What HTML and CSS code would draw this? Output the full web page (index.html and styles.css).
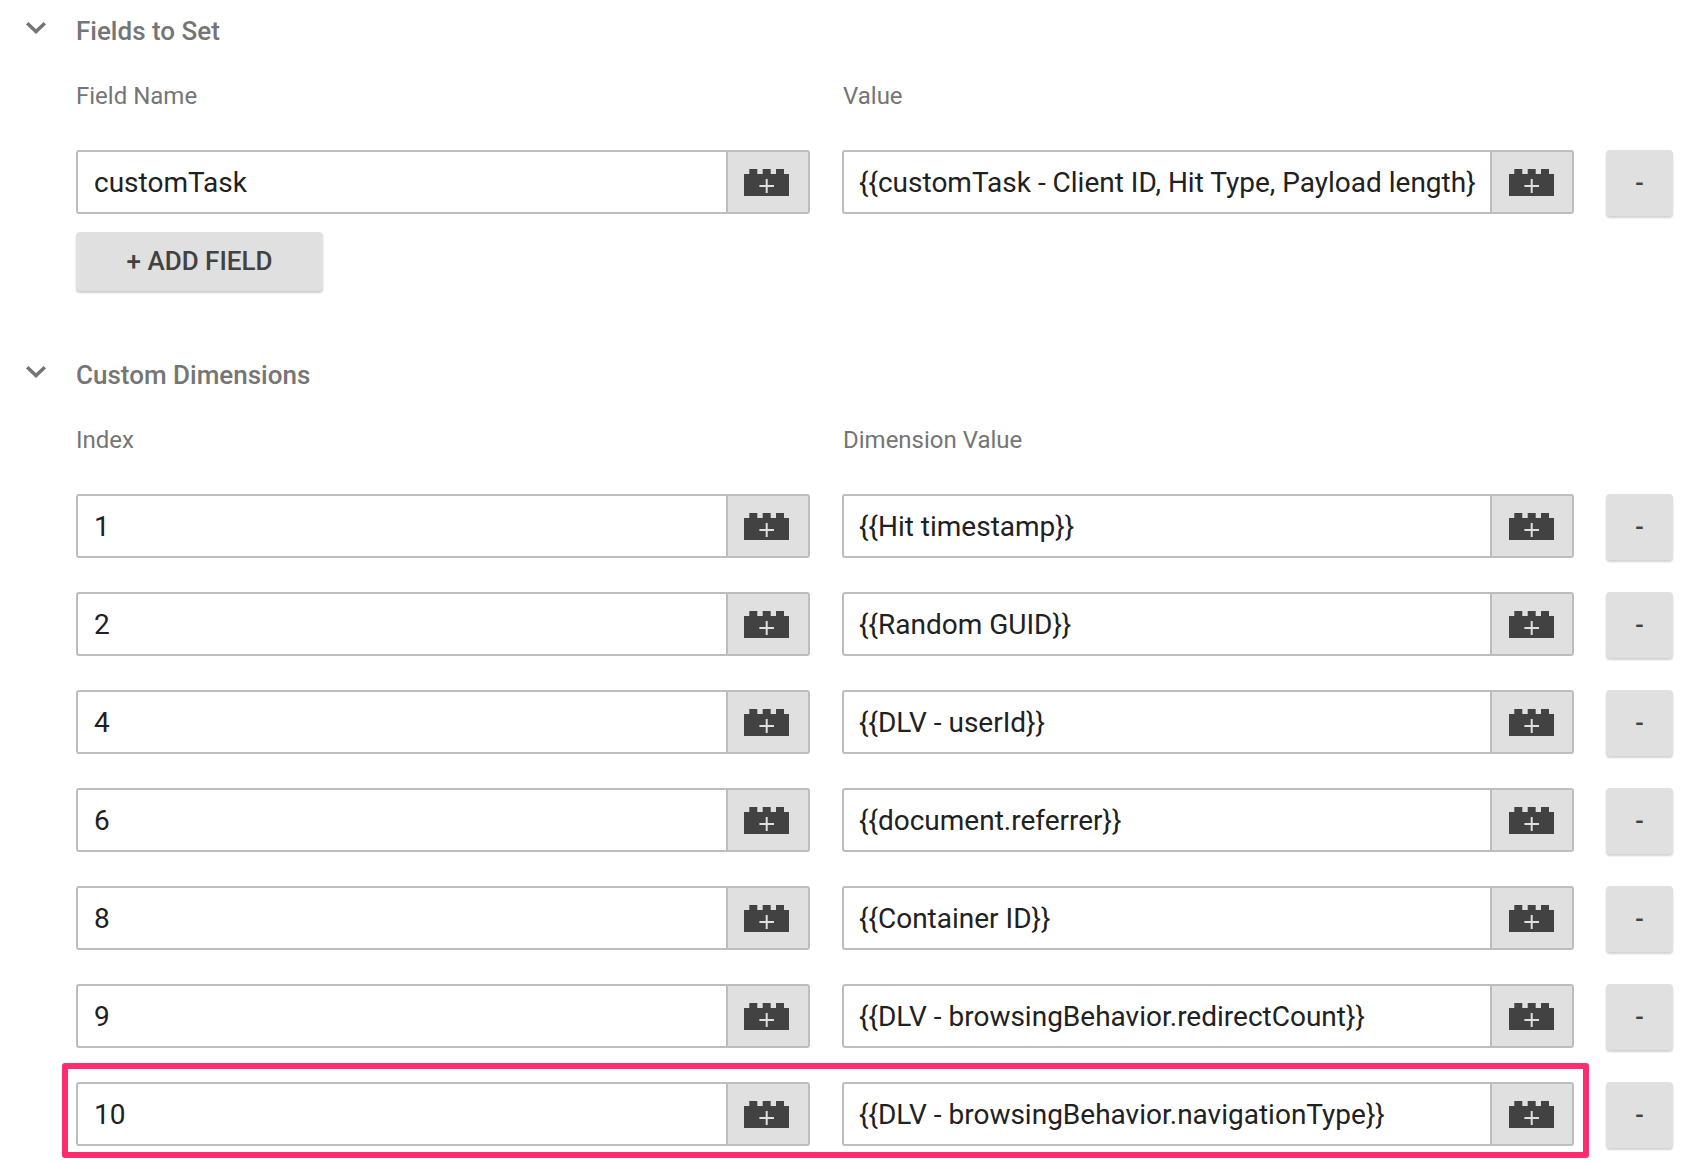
FILE: index.html
```html
<!DOCTYPE html>
<html lang="en">
<head>
  <meta charset="UTF-8">
  <title>Fields to Set</title>
  <link rel="stylesheet" href="styles.css">
</head>
<body>
  <svg width="0" height="0" class="defs">
    <symbol id="brick" viewBox="0 0 45 27">
      <path fill="#424242" d="M5.3 0h8v5h5.4V0h8v5H32V0h8v5h5v22H0V5h5.3z"/>
      <path fill="#e0e0e0" d="M21.7 10h2v6h6.3v2h-6.3v6h-2v-6h-6.3v-2h6.3z"/>
    </symbol>
    <symbol id="chevron" viewBox="0 0 20 12">
      <path fill="none" stroke="#757575" stroke-width="3.4" d="M1.2 1.2 10 9.6l8.8-8.4"/>
    </symbol>
  </svg>

  <section class="section first">
    <h2 class="section-title"><svg class="chevron"><use href="#chevron"/></svg>Fields to Set</h2>
    <div class="labels">
      <span class="label">Field Name</span>
      <span class="label">Value</span>
    </div>
    <div class="row">
      <div class="field"><span class="field-text">customTask</span><button class="picker"><svg class="brick"><use href="#brick"/></svg></button></div>
      <div class="field"><span class="field-text">{{customTask - Client ID, Hit Type, Payload length}</span><button class="picker"><svg class="brick"><use href="#brick"/></svg></button></div>
      <button class="remove">-</button>
    </div>
    <button class="add-field">+ ADD FIELD</button>
  </section>

  <section class="section">
    <h2 class="section-title"><svg class="chevron"><use href="#chevron"/></svg>Custom Dimensions</h2>
    <div class="labels">
      <span class="label">Index</span>
      <span class="label">Dimension Value</span>
    </div>
    <div class="row">
      <div class="field"><span class="field-text">1</span><button class="picker"><svg class="brick"><use href="#brick"/></svg></button></div>
      <div class="field"><span class="field-text">{{Hit timestamp}}</span><button class="picker"><svg class="brick"><use href="#brick"/></svg></button></div>
      <button class="remove">-</button>
    </div>
    <div class="row">
      <div class="field"><span class="field-text">2</span><button class="picker"><svg class="brick"><use href="#brick"/></svg></button></div>
      <div class="field"><span class="field-text">{{Random GUID}}</span><button class="picker"><svg class="brick"><use href="#brick"/></svg></button></div>
      <button class="remove">-</button>
    </div>
    <div class="row">
      <div class="field"><span class="field-text">4</span><button class="picker"><svg class="brick"><use href="#brick"/></svg></button></div>
      <div class="field"><span class="field-text">{{DLV - userId}}</span><button class="picker"><svg class="brick"><use href="#brick"/></svg></button></div>
      <button class="remove">-</button>
    </div>
    <div class="row">
      <div class="field"><span class="field-text">6</span><button class="picker"><svg class="brick"><use href="#brick"/></svg></button></div>
      <div class="field"><span class="field-text">{{document.referrer}}</span><button class="picker"><svg class="brick"><use href="#brick"/></svg></button></div>
      <button class="remove">-</button>
    </div>
    <div class="row">
      <div class="field"><span class="field-text">8</span><button class="picker"><svg class="brick"><use href="#brick"/></svg></button></div>
      <div class="field"><span class="field-text">{{Container ID}}</span><button class="picker"><svg class="brick"><use href="#brick"/></svg></button></div>
      <button class="remove">-</button>
    </div>
    <div class="row">
      <div class="field"><span class="field-text">9</span><button class="picker"><svg class="brick"><use href="#brick"/></svg></button></div>
      <div class="field"><span class="field-text">{{DLV - browsingBehavior.redirectCount}}</span><button class="picker"><svg class="brick"><use href="#brick"/></svg></button></div>
      <button class="remove">-</button>
    </div>
    <div class="row highlighted">
      <div class="field"><span class="field-text">10</span><button class="picker"><svg class="brick"><use href="#brick"/></svg></button></div>
      <div class="field"><span class="field-text">{{DLV - browsingBehavior.navigationType}}</span><button class="picker"><svg class="brick"><use href="#brick"/></svg></button></div>
      <button class="remove">-</button>
    </div>
  </section>
</body>
</html>
```

FILE: styles.css
```css
html, body { margin: 0; background: #fff; }
body { font-family: Roboto, "Liberation Sans", sans-serif; height: 1164px; overflow: hidden; }
.defs { position: absolute; }

.section { padding: 0 0 0 76px; }
.section.first { height: 359px; padding-top: 15px; box-sizing: border-box; }

.section-title { display: flex; align-items: center; position: relative; margin: 0; height: 32px; font-size: 26px; font-weight: 500; color: #757575; }
.chevron { position: absolute; left: -50px; top: 7px; width: 20px; height: 12px; }

.labels { display: grid; grid-template-columns: 734px 731px; column-gap: 33px; margin-top: 33px; height: 32px; align-items: center; }
.label { font-size: 24px; color: #757575; }

.row { display: grid; grid-template-columns: 734px 732px 67px; column-gap: 32px; height: 67px; margin-top: 31px; position: relative; }
.labels + .row { margin-top: 38px; }

.field { display: flex; height: 64px; box-sizing: border-box; border: 2px solid #bdbdbd; border-radius: 3px; overflow: hidden; }
.field-text { flex: 1; min-width: 0; padding-left: 16px; font-size: 28px; line-height: 62px; color: #212121; white-space: nowrap; }
.field + .field .field-text { padding-left: 15px; }
.picker { width: 82px; flex: none; padding: 0; border: 0; border-left: 2px solid #bdbdbd; background: #e0e0e0; display: flex; align-items: center; justify-content: center; }
.brick { width: 45px; height: 27px; margin-top: 1px; margin-right: 1px; }
.field:first-child .brick { margin-right: 3px; }

.remove { width: 67px; height: 66px; padding: 0; border: 0; border-radius: 4px; background: #e0e0e0; box-shadow: 0 2px 2px rgba(0, 0, 0, .18); font: 500 25px Roboto, sans-serif; color: #424242; }
.add-field { display: block; width: 247px; height: 59px; margin-top: 15px; padding: 0 0 2px; border: 0; border-radius: 4px; background: #e0e0e0; box-shadow: 0 2px 2px rgba(0, 0, 0, .2); font: 500 26px Roboto, sans-serif; color: #424242; }

.highlighted::after { content: ""; position: absolute; left: -14px; top: -19px; width: 1527px; height: 95px; box-sizing: border-box; border: 6px solid #ff2d6f; border-radius: 3px; }
```
